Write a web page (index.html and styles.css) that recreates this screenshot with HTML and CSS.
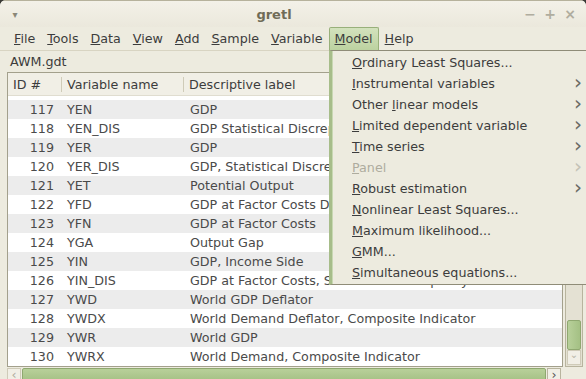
FILE: index.html
```html
<!DOCTYPE html>
<html>
<head>
<title>gretl</title>
<link rel="stylesheet" href="styles.css">
</head>
<body>
<div class="window">
    <div class="titlebar">
        <span class="win-menu">&#9662;</span>
        <span class="win-title">gretl</span>
        <span class="win-buttons"><span>&#8722;</span><span>+</span><span>&#215;</span></span>
    </div>
    <div class="menubar">
        <span class="menu-item"><u>F</u>ile</span>
        <span class="menu-item"><u>T</u>ools</span>
        <span class="menu-item"><u>D</u>ata</span>
        <span class="menu-item"><u>V</u>iew</span>
        <span class="menu-item"><u>A</u>dd</span>
        <span class="menu-item"><u>S</u>ample</span>
        <span class="menu-item"><u>V</u>ariable</span>
        <span class="menu-item active"><u>M</u>odel</span>
        <span class="menu-item"><u>H</u>elp</span>
    </div>
    <div class="filename">AWM.gdt</div>
    <div class="main">
        <div class="list-frame">
            <div class="list-header">
                <div class="col-id">ID #</div>
                <div class="col-name">Variable name</div>
                <div class="col-label">Descriptive label</div>
            </div>
            <div class="list-body" id="rows">
                <div class="row partial"></div>
            </div>
        </div>
        <div class="vscroll">
            <div class="vthumb"></div>
            <div class="varrow">&#8964;</div>
        </div>
    </div>
    <div class="hscroll">
        <div class="harrow">&lsaquo;</div>
        <div class="hthumb"></div>
        <div class="harrow right">&rsaquo;</div>
    </div>

    <div class="dropdown">
        <div class="dd-item"><u>O</u>rdinary Least Squares...</div>
        <div class="dd-item sub"><u>I</u>nstrumental variables</div>
        <div class="dd-item sub">Other <u>l</u>inear models</div>
        <div class="dd-item sub"><u>L</u>imited dependent variable</div>
        <div class="dd-item sub"><u>T</u>ime series</div>
        <div class="dd-item sub disabled"><u>P</u>anel</div>
        <div class="dd-item sub"><u>R</u>obust estimation</div>
        <div class="dd-item"><u>N</u>onlinear Least Squares...</div>
        <div class="dd-item"><u>M</u>aximum likelihood...</div>
        <div class="dd-item"><u>G</u>MM...</div>
        <div class="dd-item"><u>S</u>imultaneous equations...</div>
    </div>
</div>

<script>
    var vars = [
        [117, "YEN", "GDP"],
        [118, "YEN_DIS", "GDP Statistical Discrepancy"],
        [119, "YER", "GDP"],
        [120, "YER_DIS", "GDP, Statistical Discrepancy"],
        [121, "YET", "Potential Output"],
        [122, "YFD", "GDP at Factor Costs Deflator"],
        [123, "YFN", "GDP at Factor Costs"],
        [124, "YGA", "Output Gap"],
        [125, "YIN", "GDP, Income Side"],
        [126, "YIN_DIS", "GDP at Factor Costs, Statistical Discrepancy"],
        [127, "YWD", "World GDP Deflator"],
        [128, "YWDX", "World Demand Deflator, Composite Indicator"],
        [129, "YWR", "World GDP"],
        [130, "YWRX", "World Demand, Composite Indicator"]
    ];
    var body = document.getElementById("rows");
    vars.forEach(function (v) {
        var row = document.createElement("div");
        row.className = "row" + (v[0] % 2 ? " odd" : "");
        row.innerHTML = '<div class="col-id">' + v[0] + '</div><div class="col-name">' + v[1] +
            '</div><div class="col-label">' + v[2] + '</div>';
        body.appendChild(row);
    });
</script>
</body>
</html>
```

FILE: styles.css
```css
body {
    margin: 0;
    width: 586px;
    height: 379px;
    overflow: hidden;
    background: #3a3a36;
    font-family: "DejaVu Sans", sans-serif;
    font-size: 12.7px;
    color: #3c3c3c;
}
.window {
    position: relative;
    width: 586px;
    height: 379px;
    background: #edebdf;
    border-radius: 6px 6px 0 0;
    overflow: hidden;
}
.titlebar {
    height: 27px;
    display: flex;
    align-items: center;
    background: linear-gradient(#f3f1e8, #ebe8dc);
    border-top: 1px solid #b6b29c;
    box-sizing: border-box;
}
.win-menu {
    width: 30px;
    text-align: center;
    color: #8a8778;
    font-size: 10px;
}
.win-title {
    flex: 1;
    text-align: center;
    font-weight: bold;
    font-size: 13px;
    color: #6f6b57;
    padding-right: 6px;
}
.win-buttons {
    width: 62px;
    display: flex;
    gap: 8px;
    color: #b0ad9f;
    font-size: 14px;
    font-weight: bold;
}
.win-buttons span {
    width: 12px;
    text-align: center;
}
.menubar {
    height: 23px;
    display: flex;
    align-items: stretch;
    padding-left: 8px;
    border-bottom: 1px solid #d8d4c2;
}
.menu-item {
    padding: 0 6px;
    line-height: 23px;
}
.menu-item.active {
    background: linear-gradient(#d3e2bd, #bcd2a0);
    border: 1px solid #98b07a;
    border-bottom: none;
    border-radius: 2px 2px 0 0;
    line-height: 22px;
    padding: 0 5px;
}
.filename {
    height: 21px;
    line-height: 21px;
    padding-left: 10px;
}
.main {
    display: flex;
    height: 295px;
}
.list-frame {
    margin-left: 7px;
    width: 554px;
    border: 1px solid #a3a08c;
    background: #ffffff;
    overflow: hidden;
}
.list-header {
    display: flex;
    height: 22px;
    line-height: 22px;
    background: #f1efe6;
    border-bottom: 1px solid #e0ddd0;
}
.list-header > div {
    border-right: 1px solid #cfcbb8;
    height: 15px;
    line-height: 15px;
    margin-top: 4px;
    padding-left: 5px;
}
.list-header .col-id {
    width: 48px;
    text-align: left;
}
.list-header .col-label {
    border-right: none;
}
.row {
    display: flex;
    height: 19px;
    line-height: 19px;
    color: #4a4a4a;
}
.row.partial {
    height: 4px;
}
.row.odd {
    background: #ececec;
}
.col-id {
    width: 46px;
    text-align: right;
    flex: none;
}
.col-name {
    width: 116px;
    padding-left: 13px;
    flex: none;
}
.col-label {
    padding-left: 7px;
    white-space: nowrap;
}
.vscroll {
    width: 18px;
    margin-left: 2px;
    border: 1px solid #b8b49e;
    background: #e4e1d3;
    display: flex;
    flex-direction: column;
    justify-content: flex-end;
    align-items: center;
    box-sizing: border-box;
}
.vthumb {
    width: 14px;
    height: 30px;
    border: 1px solid #8fa870;
    border-radius: 2px;
    background: linear-gradient(90deg, #b8d09a, #a4c084);
    box-sizing: border-box;
}
.varrow {
    width: 14px;
    height: 15px;
    border: 1px solid #cfcbb8;
    background: #f1efe6;
    color: #b8b6a8;
    font-size: 10px;
    text-align: center;
    line-height: 8px;
    box-sizing: border-box;
    margin-bottom: 1px;
}
.hscroll {
    display: flex;
    margin-left: 7px;
    margin-top: 1px;
    height: 14px;
    gap: 1px;
}
.harrow {
    width: 14px;
    border: 1px solid #cfcbb8;
    background: #f1efe6;
    color: #b0ad9f;
    line-height: 11px;
    text-align: center;
    box-sizing: border-box;
}
.harrow.right {
    color: #555;
    border-color: #b8b49e;
}
.hthumb {
    width: 524px;
    border: 1px solid #8fa870;
    border-radius: 2px;
    background: linear-gradient(#b8d09a, #a4c084);
    box-sizing: border-box;
}
.dropdown {
    position: absolute;
    left: 329px;
    top: 50px;
    width: 270px;
    height: 235px;
    background: #edebdf;
    border: 1px solid #8f8c78;
    border-left: 3px solid #a7bd8a;
    box-sizing: border-box;
    padding-top: 1px;
    box-shadow: inset 1px 0 0 #c8d8b2;
}
.dd-item {
    position: relative;
    height: 21px;
    line-height: 21px;
    padding-left: 20px;
}
.dd-item.sub::after {
    content: "\203A";
    position: absolute;
    left: 242px;
    top: -1px;
    font-size: 20px;
    color: #6a6a64;
}
.dd-item.disabled {
    color: #aeac9e;
}
.dd-item.disabled::after {
    color: #c4c2b6;
}
```
